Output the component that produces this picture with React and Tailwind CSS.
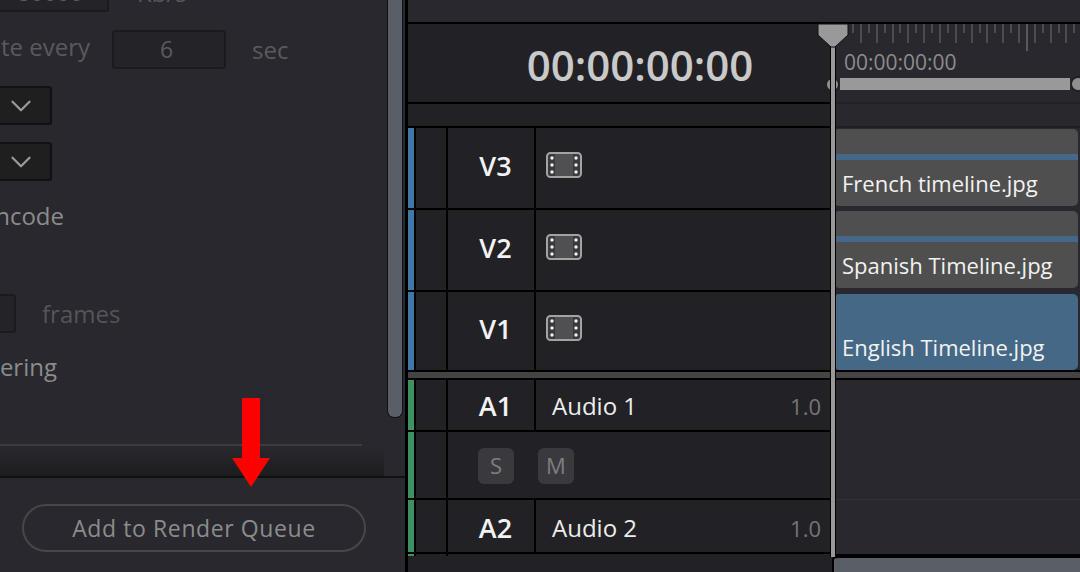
import { ChevronDown } from "lucide-react";

const ticks = Array.from({ length: 29 }, (_, i) => i);

// film strip icon used in the video track headers
function FilmIcon() {
  const dots = [6, 13, 20];
  return (
    <svg width="36" height="26" viewBox="0 0 36 26" className="block">
      <rect x="1" y="1" width="34" height="24" rx="3.5" fill="#3a3a3c" stroke="#a3a3a3" strokeWidth="2" />
      <rect x="9" y="2" width="18" height="22" fill="#505052" />
      {dots.map((y) => (
        <g key={y}>
          <circle cx="6" cy={y} r="1.7" fill="#f0f0f0" />
          <circle cx="30" cy={y} r="1.7" fill="#f0f0f0" />
        </g>
      ))}
    </svg>
  );
}

function Field({ children, className }) {
  return (
    <div className={`h-[39px] shrink-0 flex items-center justify-center rounded-[3px] border-2 border-[#1b1b1f] bg-[#242428] text-[23px] text-[#5a5a5e] ${className}`}>
      {children}
    </div>
  );
}

function Dropdown() {
  return (
    <div className="h-[39px] w-[61px] -ml-[9px] flex items-center justify-end pr-[12px] rounded-[3px] border-2 border-[#111113] bg-[#1f1f1f] text-[#9a9a9a]">
      <ChevronDown size={34} strokeWidth={1.6} />
    </div>
  );
}

function VideoRow({ name, clip, blue, h }) {
  return (
    <div className="flex" style={{ height: h }}>
      <div className="w-[422px] shrink-0 flex bg-[#222226] border-b-2 border-black">
        <div className="w-[6px] bg-[#3f78a8]" />
        <div className="w-[34px] border-x-2 border-black" />
        <div className="w-[88px] border-r-2 border-black flex items-center justify-center pl-[9px] pb-[4px] text-[27px] font-semibold text-[#f2f2f2]">
          {name}
        </div>
        <div className="flex-1 flex items-center pl-[10px] pb-[6px]">
          <FilmIcon />
        </div>
      </div>
      <div className={`flex-1 pl-[4px] pr-[2px] bg-[#28282e] ${blue ? "pt-[2px] border-b-2 border-black" : "pt-[1px] pb-[4px]"}`}>
        <div className={`relative h-full rounded-[5px] overflow-hidden flex flex-col justify-end pb-[8px] pl-[8px] text-[22px] leading-[30px] text-[#f2f2f2] ${blue ? "bg-[#456886]" : "bg-[#4f4f4f]"}`}>
          {!blue && <div className="absolute left-0 right-0 top-[25px] h-[6px] bg-[#44688a]" />}
          {clip}
        </div>
      </div>
    </div>
  );
}

function AudioRow({ name, label, h, className }) {
  return (
    <div className="flex" style={{ height: h }}>
      <div className="w-[422px] shrink-0 flex bg-[#222226] border-b-2 border-black">
        <div className="w-[6px] bg-[#3f9163]" />
        <div className="w-[34px] border-x-2 border-black" />
        <div className={`w-[88px] border-r-2 border-black flex items-center justify-center pl-[9px] text-[27px] font-semibold text-[#f2f2f2] ${className}`}>
          {name}
        </div>
        <div className={`flex-1 flex items-center justify-between pl-[16px] pr-[9px] text-[24px] text-[#ededed] ${className}`}>
          <span>{label}</span>
          <span className="text-[22px] text-[#757575]">1.0</span>
        </div>
      </div>
      <div className="flex-1 bg-[#28282e]" />
    </div>
  );
}

export default function App() {
  return (
    <div className="relative w-[1080px] h-[572px] overflow-hidden flex bg-[#28282e] font-['Open_Sans','Noto_Sans',sans-serif]">
      {/* left render settings panel */}
      <div className="w-[408px] shrink-0 flex flex-col border-r-[3px] border-black">
        <div className="h-[478px] shrink-0 flex border-b-2 border-[#111114] overflow-hidden">
          <div className="w-[387px] shrink-0 flex flex-col overflow-hidden">
            <div className="-mt-[27px] flex flex-col gap-[17px]">
              <div className="flex items-center">
                <Field className="w-[118px] -ml-[9px]">80000</Field>
                <span className="ml-[28px] text-[24px] text-[#5a5a5e]">Kb/s</span>
              </div>
              <div className="flex items-center">
                <div className="w-[90px] overflow-hidden flex justify-end whitespace-nowrap text-[24px] text-[#5a5a5e] pb-[4px]">Update every</div>
                <Field className="w-[114px] ml-[22px] pr-[5px]">6</Field>
                <span className="ml-[26px] pt-[2px] text-[24px] text-[#5a5a5e]">sec</span>
              </div>
              <Dropdown />
              <Dropdown />
              <div className="h-[39px] flex items-center pb-[4px]">
                <div className="w-[64px] overflow-hidden flex justify-end whitespace-nowrap text-[24px] text-[#8c8c8c]">Encode</div>
              </div>
            </div>
            <div className="mt-[57px] flex items-center">
              <Field className="w-[25px] -ml-[9px]" />
              <span className="ml-[26px] text-[24px] text-[#55555a]">frames</span>
            </div>
            <div className="mt-[17px] h-[39px] flex items-center pb-[6px]">
              <div className="w-[57px] overflow-hidden flex justify-end whitespace-nowrap text-[24px] text-[#8c8c8c]">Rendering</div>
            </div>
            <div className="mt-auto">
              <div className="w-[362px] h-[2px] bg-[#3c3c40]" />
              <div className="w-[384px] h-[30px] bg-gradient-to-b from-[#28282e] to-[#1d1d20]" />
            </div>
          </div>
          <div className="w-[16px] h-[422px] -mt-[4px] shrink-0 rounded-b-[7px] border-x-[1.5px] border-b-[1.5px] border-[#111114] bg-[#5a5e66]" />
        </div>
        <div className="flex-1 flex items-start pl-[22px] pt-[26px]">
          <button className="w-[344px] h-[48px] rounded-full border-2 border-[#47474b] text-[23px] tracking-[0.6px] text-[#8c8c8c]">
            Add to Render Queue
          </button>
        </div>
      </div>

      {/* timeline */}
      <div className="flex-1 flex flex-col">
        <div className="h-[24px] shrink-0 border-b-2 border-black bg-[#28282e]" />
        <div className="h-[80px] shrink-0 flex">
          <div className="w-[422px] shrink-0 flex items-center justify-center pl-[42px] pt-[2px] bg-[#222226] border-b-2 border-black text-[42px] font-semibold text-[#c9c9c9]">
            00:00:00:00
          </div>
          <div className="flex-1 flex flex-col pl-[14px] bg-[#28282e] border-b-2 border-[#222226]">
            <div className="h-[26px] flex items-start gap-[5.92px] pl-[8px]">
              {ticks.map((i) => (
                <div key={i} className={`w-[2px] shrink-0 ${i === 22 ? "h-[27px] bg-[#5a5a5e]" : i % 2 === 1 ? "h-[19px] bg-[#4c4c50]" : "h-[9px] bg-[#4c4c50]"}`} />
              ))}
            </div>
            <div className="text-[21px] leading-[24px] text-[#8c8c8c] whitespace-nowrap">00:00:00:00</div>
          </div>
        </div>
        <div className="h-[24px] shrink-0 flex">
          <div className="w-[422px] shrink-0 bg-[#222226] border-b-2 border-black" />
          <div className="flex-1 bg-[#28282e] border-b-2 border-[#1f1f23]" />
        </div>
        <VideoRow name="V3" clip="French timeline.jpg" h={82} />
        <VideoRow name="V2" clip="Spanish Timeline.jpg" h={82} />
        <VideoRow name="V1" clip="English Timeline.jpg" blue h={80} />
        <div className="h-[8px] shrink-0 border-b-2 border-black bg-[#444444]" />
        <AudioRow name="A1" label="Audio 1" h={52} className="pt-[2px]" />
        <div className="h-[68px] shrink-0 flex">
          <div className="w-[422px] shrink-0 flex bg-[#222226] border-b-2 border-black">
            <div className="w-[6px] bg-[#3f9163]" />
            <div className="w-[34px] border-x-2 border-black" />
            <div className="flex-1 flex items-center gap-[24px] pl-[30px] pt-[1px] text-[22px] text-[#7e7e7e]">
              <div className="w-[36px] h-[36px] rounded-[6px] bg-[#3a3a3e] flex items-center justify-center">S</div>
              <div className="w-[36px] h-[36px] rounded-[6px] bg-[#3a3a3e] flex items-center justify-center">M</div>
            </div>
          </div>
          <div className="flex-1 bg-[#28282e] border-b border-[#313136]" />
        </div>
        <AudioRow name="A2" label="Audio 2" h={54} className="pt-[4px]" />
        <div className="flex-1 flex">
          <div className="w-[424px] shrink-0 bg-[#222226]">
            <div className="h-[2px] w-[40px] flex">
              <div className="w-[6px] bg-[#3f9163]" />
              <div className="w-[34px] border-x-2 border-black" />
            </div>
          </div>
          <div className="flex-1 border-t-4 border-l-2 border-black bg-[#5a5e66] rounded-tl-[6px]" />
        </div>
      </div>

      {/* range bar, sits over the ruler */}
      <div className="absolute left-[825px] right-[-6px] top-[78px] h-[12px] flex items-center">
        <div className="w-[15px] h-[15px] shrink-0 rounded-full border-2 border-[#222226] bg-[#8f8f8f]" />
        <div className="flex-1 h-[12px] bg-[#999999]" />
        <div className="w-[16px] h-[16px] shrink-0 rounded-full border-2 border-[#222226] bg-[#8f8f8f]" />
      </div>

      {/* playhead */}
      <div className="absolute left-[830px] top-[24px] w-[6px] h-[533px] border-x-[1.5px] border-black bg-[#999999]" />
      <svg width="32" height="26" viewBox="0 0 32 26" className="absolute left-[817px] top-[23px]">
        <path d="M1 1H31V12L18 24H14L1 12Z" fill="#999999" stroke="#111" strokeWidth="1" />
      </svg>

      {/* red arrow annotation */}
      <svg width="38" height="90" viewBox="0 0 38 90" className="absolute left-[232px] top-[398px]">
        <path d="M10 0H28V60H38L19 89L0 60H10Z" fill="#ff0000" />
      </svg>
    </div>
  );
}
